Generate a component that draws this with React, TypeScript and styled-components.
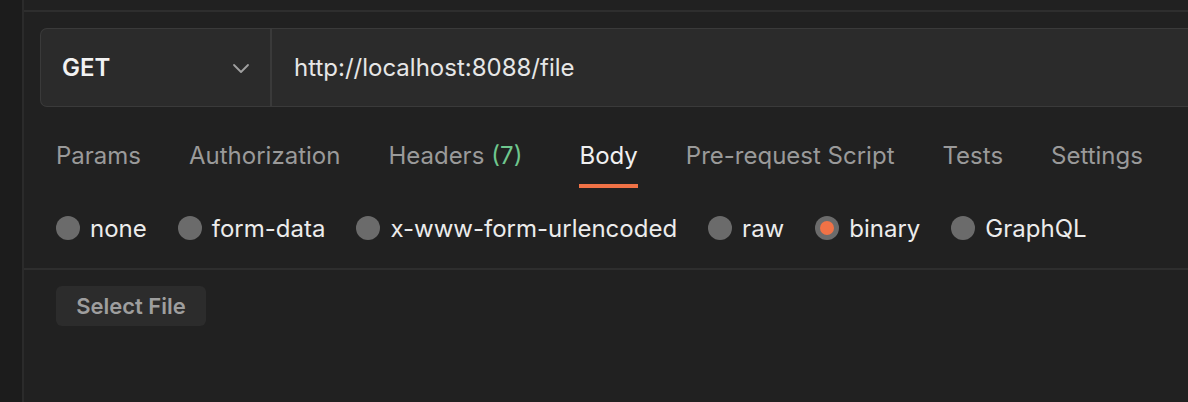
import React from "react";
import styled, { createGlobalStyle } from "styled-components";

const Global = createGlobalStyle`
  html, body { margin: 0; padding: 0; background: #212121; }
  body { font-family: Inter, "Noto Sans", sans-serif; -webkit-font-smoothing: antialiased; }
`;

const Page = styled.div`
  display: flex;
  height: 402px;
  overflow: hidden;
  background: #212121;
`;

const Sidebar = styled.div`
  width: 22px;
  flex: none;
  background: #1c1c1c;
  border-right: 2px solid #2b2b2b;
`;

const Main = styled.div`
  flex: 1;
  min-width: 0;
  display: flex;
  flex-direction: column;
`;

const TopStrip = styled.div`
  height: 10px;
  border-bottom: 2px solid #2e2e2e;
`;

const UrlBar = styled.div`
  margin: 16px 0 0 16px;
  height: 77px;
  display: flex;
  border: 1px solid #3a3a3a;
  border-right: none;
  border-radius: 7px 0 0 7px;
  background: #2b2b2b;
`;

const Method = styled.div`
  width: 188px;
  flex: none;
  display: flex;
  align-items: center;
  justify-content: space-between;
  padding: 0 20px 0 21px;
  border-right: 2px solid #3a3a3a;
  color: #f2f2f2;
  font-size: 24px;
  font-weight: 600;
`;

const Url = styled.div`
  display: flex;
  align-items: center;
  padding-left: 22px;
  color: #e6e6e6;
  font-size: 24px;
`;

const Tabs = styled.div`
  display: flex;
  gap: 48px;
  padding: 0 0 0 32px;
  margin-top: 22px;
`;

const Tab = styled.div<{ $active?: boolean; $extra?: boolean }>`
  position: relative;
  height: 60px;
  padding-top: 12px;
  box-sizing: border-box;
  margin-right: ${(p) => (p.$extra ? "9px" : "0")};
  font-size: 24px;
  line-height: 29px;
  white-space: nowrap;
  color: ${(p) => (p.$active ? "#f0f0f0" : "#9a9a9a")};
  &::after {
    content: "";
    display: ${(p) => (p.$active ? "block" : "none")};
    position: absolute;
    left: 0;
    right: 0;
    top: 55px;
    height: 4px;
    background: #f07246;
  }
`;

const Count = styled.span`
  color: #6fc78e;
  margin-left: 7px;
`;

const Radios = styled.div`
  display: flex;
  align-items: center;
  gap: 31px;
  padding: 0 0 1px 32px;
  height: 81px;
  border-bottom: 2px solid #2e2e2e;
  box-sizing: border-box;
`;

const RadioItem = styled.label`
  display: flex;
  align-items: center;
  gap: 10px;
  font-size: 24px;
  white-space: nowrap;
  color: #ececec;
`;

const Dot = styled.span<{ $checked?: boolean }>`
  width: 24px;
  height: 24px;
  border-radius: 50%;
  background: #6b6b6b;
  display: flex;
  align-items: center;
  justify-content: center;
  &::after {
    content: "";
    display: ${(p) => (p.$checked ? "block" : "none")};
    width: 14px;
    height: 14px;
    border-radius: 50%;
    background: #f07246;
  }
`;

const Body = styled.div`
  padding: 16px 0 0 32px;
`;

const SelectFile = styled.button`
  width: 150px;
  height: 40px;
  border: none;
  border-radius: 6px;
  background: #2c2c2c;
  color: #9e9e9e;
  font-family: Inter, "Noto Sans", sans-serif;
  font-size: 22px;
  font-weight: 600;
  padding: 0;
`;

const Chevron = () => (
  <svg width="18" height="18" viewBox="0 0 18 18" fill="none">
    <path d="M2 6 L9 13 L16 6" stroke="#a0a0a0" strokeWidth="1.8" strokeLinecap="round" strokeLinejoin="round" />
  </svg>
);

const tabs = ["Params", "Authorization", "Headers", "Body", "Pre-request Script", "Tests", "Settings"];
const bodies = ["none", "form-data", "x-www-form-urlencoded", "raw", "binary", "GraphQL"];

export default function App() {
  return (
    <>
      <Global />
      <Page>
        <Sidebar />
        <Main>
          <TopStrip />
          <UrlBar>
            <Method>
              <span>GET</span>
              <Chevron />
            </Method>
            <Url>http://localhost:8088/file</Url>
          </UrlBar>
          <Tabs>
            {tabs.map((t) => (
              <Tab key={t} $active={t === "Body"} $extra={t === "Headers"}>
                {t}
                {t === "Headers" && <Count>(7)</Count>}
              </Tab>
            ))}
          </Tabs>
          <Radios>
            {bodies.map((b) => (
              <RadioItem key={b}>
                <Dot $checked={b === "binary"} />
                {b}
              </RadioItem>
            ))}
          </Radios>
          <Body>
            <SelectFile>Select File</SelectFile>
          </Body>
        </Main>
      </Page>
    </>
  );
}
